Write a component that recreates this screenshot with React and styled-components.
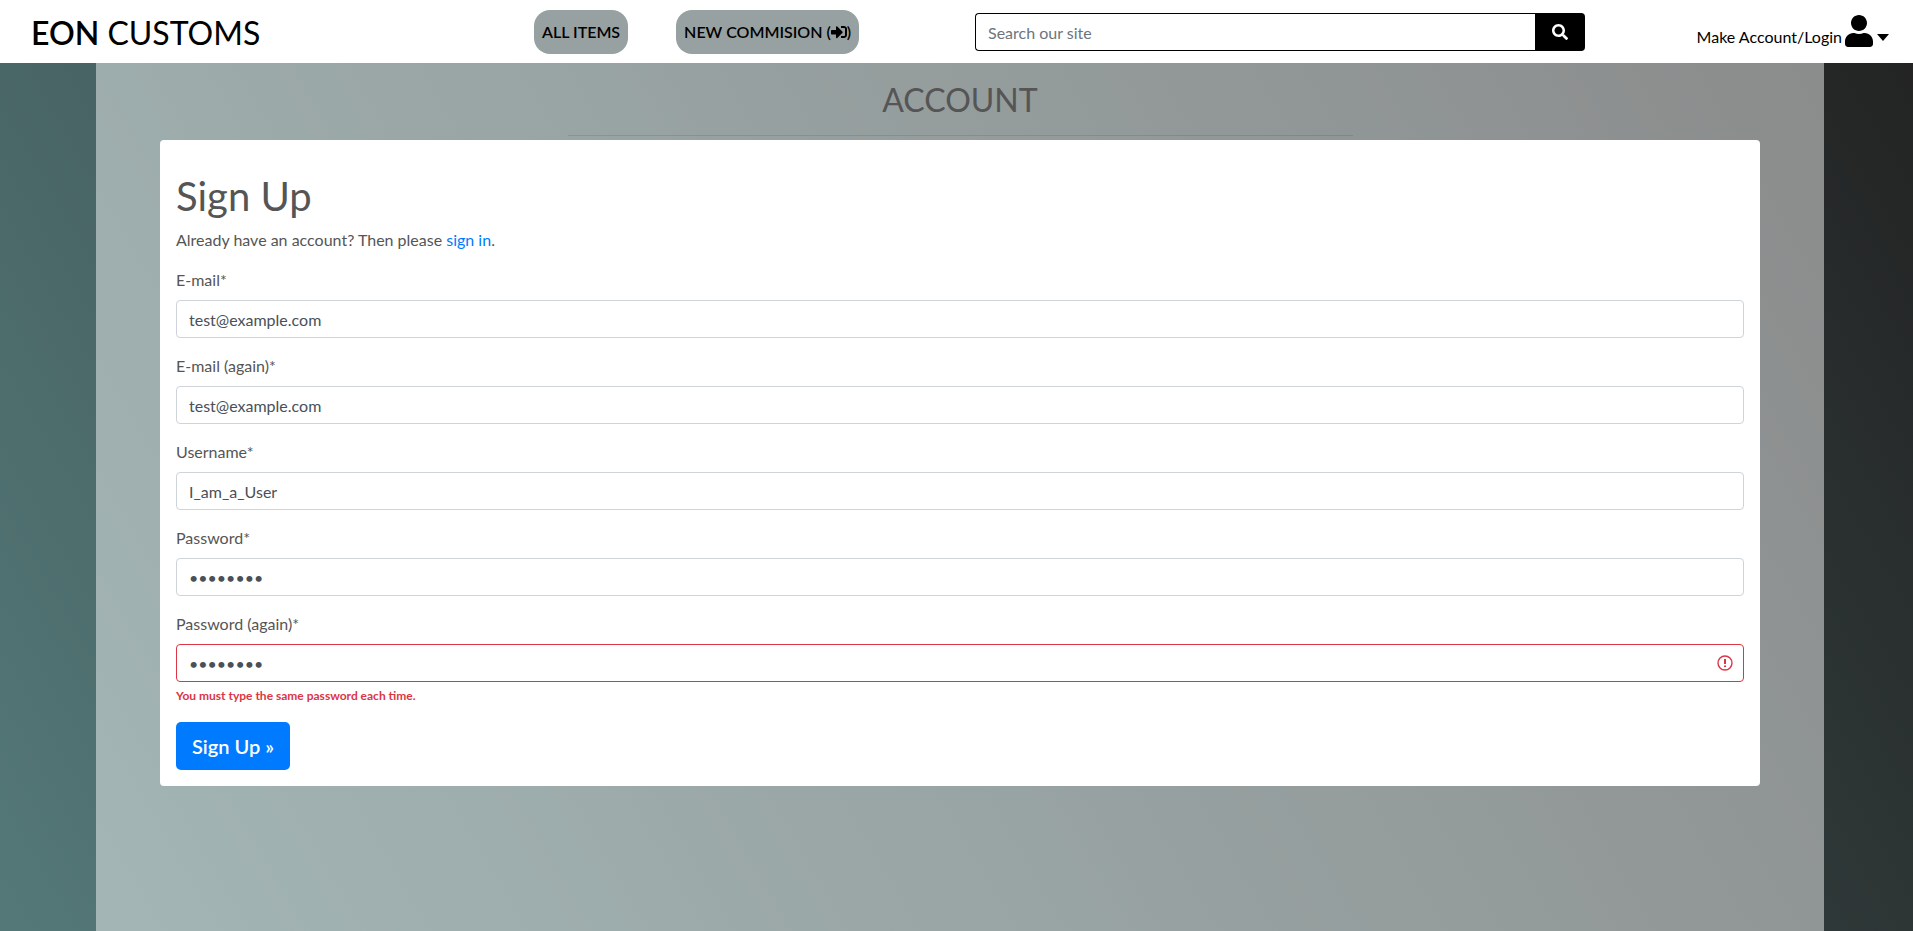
import React from "react";
import styled, { createGlobalStyle } from "styled-components";
import { FaSearch, FaUser, FaSignInAlt } from "react-icons/fa";

const GlobalStyle = createGlobalStyle`
  *, *::before, *::after { box-sizing: border-box; }
  body {
    margin: 0;
    font-family: Lato, "Liberation Sans", sans-serif;
    font-size: 16px;
    line-height: 24px;
    color: #555;
  }
`;

const Page = styled.div`
  min-height: 100vh;
  display: flex;
  flex-direction: column;
  background: linear-gradient(60deg, #547878, #222222);
`;

const TopBar = styled.header`
  display: grid;
  grid-template-columns: 480fr 480fr 640fr 313fr;
  align-items: center;
  height: 63px;
  background: #fff;
  color: #000;
`;

const Logo = styled.a`
  padding: 2px 0 0 31px;
  font-size: 32px;
  line-height: 40px;
  color: #000;
  text-decoration: none;
`;

const LogoStrong = styled.strong`
  font-weight: 600;
`;

const NavLinks = styled.nav`
  display: flex;
  gap: 48px;
  padding-left: 54px;
`;

const NavLink = styled.a`
  display: flex;
  align-items: center;
  padding: 10px 8px;
  border-radius: 16px;
  background: #98a1a1;
  color: #000;
  font-weight: 600;
  white-space: nowrap;
  text-decoration: none;
`;

const SearchForm = styled.form`
  display: flex;
  padding: 0 15px;
`;

const SearchInput = styled.input`
  flex: 1;
  min-width: 0;
  height: 38px;
  padding: 8px 12px 6px;
  border: 1px solid #000;
  border-right: 0;
  border-radius: 4px 0 0 4px;
  font: inherit;
  color: #495057;
  &::placeholder { color: #6c757d; opacity: 1; }
`;

const SearchButton = styled.button`
  display: flex;
  align-items: center;
  justify-content: center;
  width: 50px;
  border: 0;
  border-radius: 0 4px 4px 0;
  background: #000;
  color: #fff;
  font-size: 16px;
`;

const AccountMenu = styled.button`
  display: flex;
  align-items: baseline;
  justify-self: end;
  gap: 3px;
  margin-right: 24px;
  padding: 0 0 4px;
  border: 0;
  background: none;
  font: inherit;
  color: #000;
  white-space: nowrap;
`;

const UserIcon = styled(FaUser)`
  width: 28px;
  height: 32px;
  transform: translateY(4px);
`;

const Caret = styled.span`
  align-self: center;
  margin: 16px 0 0 1px;
  border: 6px solid transparent;
  border-top: 7px solid #000;
  border-bottom: 0;
`;

const Panel = styled.main`
  flex: 1;
  margin: 0 89px 0 96px;
  padding: 16px 64px;
  background: rgba(255, 255, 255, 0.47);
`;

const PageTitle = styled.h2`
  margin: 0;
  font-size: 32px;
  line-height: 42px;
  font-weight: 400;
  text-align: center;
`;

const Divider = styled.hr`
  width: calc(50% - 15px);
  margin: 14px auto 4px;
  border: 0;
  border-top: 1px solid rgba(0, 0, 0, 0.1);
`;

const Card = styled.section`
  padding: 32px 16px 16px;
  border-radius: 4px;
  background: #fff;
`;

const Heading = styled.h1`
  margin: 0 0 8px;
  font-size: 40px;
  line-height: 48px;
  font-weight: 400;
`;

const Intro = styled.p`
  margin: 0 0 16px;
`;

const TextLink = styled.a`
  color: #007bff;
  text-decoration: none;
`;

const Field = styled.div`
  display: flex;
  flex-direction: column;
  margin-bottom: 16px;
`;

const Label = styled.label`
  margin-bottom: 8px;
`;

const InputWrap = styled.div`
  position: relative;
  display: flex;
`;

const TextInput = styled.input`
  flex: 1;
  min-width: 0;
  height: 38px;
  padding: 6px 12px;
  border: 1px solid ${(p) => (p.$invalid ? "#dc3545" : "#ced4da")};
  border-radius: 4px;
  background: #fff;
  font: inherit;
  color: #495057;
`;

const WarningMark = styled.svg`
  position: absolute;
  top: 11px;
  right: 11px;
  width: 16px;
  height: 16px;
`;

const ErrorText = styled.span`
  margin-top: 4px;
  font-size: 12px;
  line-height: 19px;
  font-weight: 700;
  color: #dc3545;
`;

const SubmitButton = styled.button`
  display: block;
  margin-top: 17px;
  padding: 8px 16px;
  border: 0;
  border-radius: 5px;
  background: #007bff;
  color: #fff;
  font-family: inherit;
  font-size: 20px;
  line-height: 32px;
  font-weight: 600;
`;

const fields = [
  { id: "email", label: "E-mail*", type: "email", value: "test@example.com" },
  { id: "email2", label: "E-mail (again)*", type: "email", value: "test@example.com" },
  { id: "username", label: "Username*", type: "text", value: "I_am_a_User" },
  { id: "password1", label: "Password*", type: "password", value: "password" },
  {
    id: "password2",
    label: "Password (again)*",
    type: "password",
    value: "passw0rd",
    error: "You must type the same password each time.",
  },
];

function FormField({ id, label, type, value, error }) {
  return (
    <Field>
      <Label htmlFor={id}>{label}</Label>
      <InputWrap>
        <TextInput
          id={id}
          type={type}
          defaultValue={value}
          $invalid={Boolean(error)}
          aria-invalid={Boolean(error)}
          aria-describedby={error ? `${id}-error` : undefined}
        />
        {error && (
          <WarningMark viewBox="0 0 16 16" fill="none" stroke="#dc3545" aria-hidden="true">
            <circle cx="8" cy="8" r="7" strokeWidth="1.4" />
            <path d="M8 4v5M8 10.4v1.6" strokeWidth="2" />
          </WarningMark>
        )}
      </InputWrap>
      {error && <ErrorText id={`${id}-error`}>{error}</ErrorText>}
    </Field>
  );
}

export default function App() {
  return (
    <Page>
      <GlobalStyle />
      <TopBar>
        <Logo href="#">
          <LogoStrong>EON</LogoStrong> CUSTOMS
        </Logo>
        <NavLinks>
          <NavLink href="#items">ALL ITEMS</NavLink>
          <NavLink href="#commission">
            NEW COMMISION (<FaSignInAlt />)
          </NavLink>
        </NavLinks>
        <SearchForm role="search">
          <SearchInput type="text" placeholder="Search our site" aria-label="Search our site" />
          <SearchButton type="button" aria-label="Search">
            <FaSearch />
          </SearchButton>
        </SearchForm>
        <AccountMenu type="button">
          Make Account/Login
          <UserIcon />
          <Caret />
        </AccountMenu>
      </TopBar>
      <Panel>
        <PageTitle>ACCOUNT</PageTitle>
        <Divider />
        <Card>
          <Heading>Sign Up</Heading>
          <Intro>
            Already have an account? Then please <TextLink href="#signin">sign in</TextLink>.
          </Intro>
          <form>
            {fields.map((f) => (
              <FormField key={f.id} {...f} />
            ))}
            <SubmitButton type="button">Sign Up »</SubmitButton>
          </form>
        </Card>
      </Panel>
    </Page>
  );
}
